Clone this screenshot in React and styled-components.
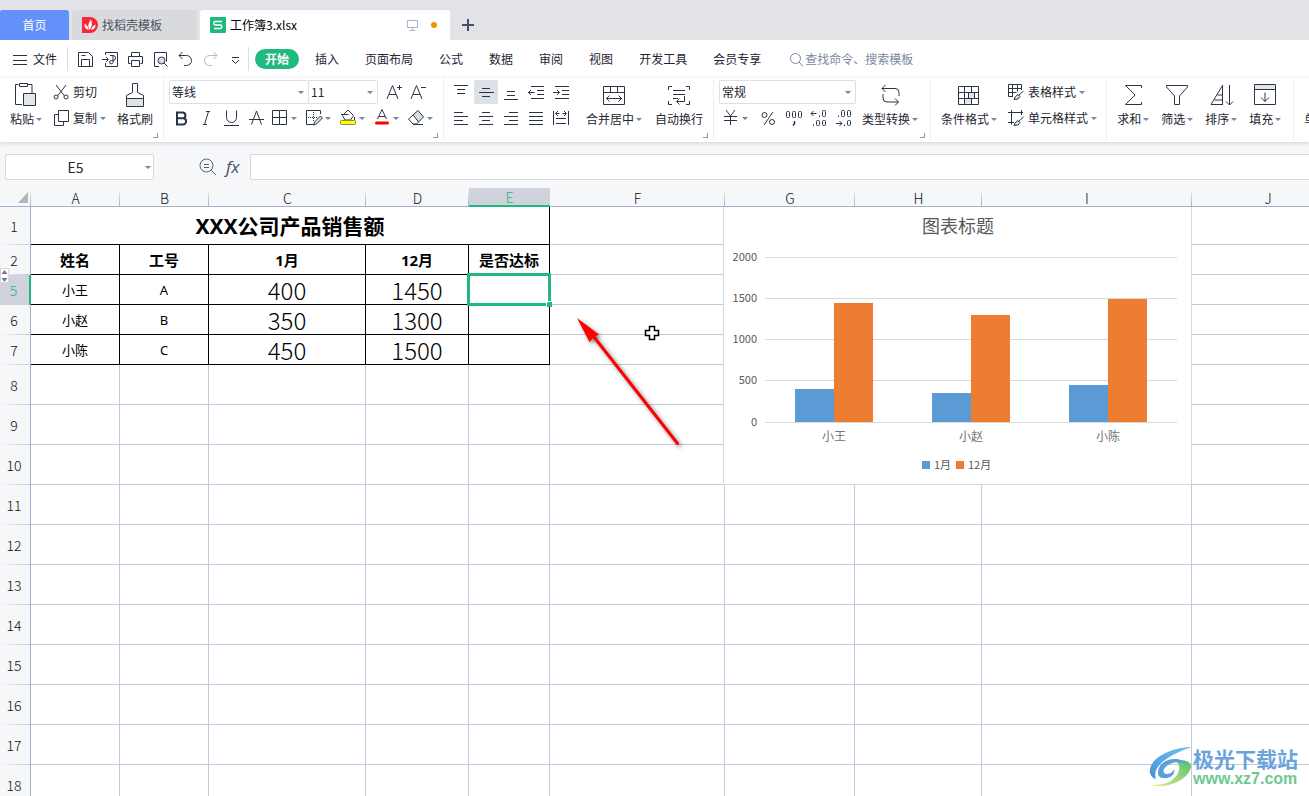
import React, { useState } from "react";
import styled, { createGlobalStyle, css } from "styled-components";

const columns = [
  { name: "A", width: 89 },
  { name: "B", width: 89 },
  { name: "C", width: 157 },
  { name: "D", width: 103 },
  { name: "E", width: 81 },
  { name: "F", width: 175 },
  { name: "G", width: 130 },
  { name: "H", width: 127 },
  { name: "I", width: 210 },
  { name: "J" }
];

const people = [
  { row: 5, name: "小王", id: "A", jan: 400, dec: 1450 },
  { row: 6, name: "小赵", id: "B", jan: 350, dec: 1300 },
  { row: 7, name: "小陈", id: "C", jan: 450, dec: 1500 }
];

const emptyRows = [8, 9, 10, 11, 12, 13, 14, 15, 16, 17, 18];
const freeColumns = ["F", "G", "H", "I", "J"];

const menus = [
  "开始",
  "插入",
  "页面布局",
  "公式",
  "数据",
  "审阅",
  "视图",
  "开发工具",
  "会员专享"
];

const icons = {
  save: <path d="M1.5 1.5h10l4 4v10h-14zM4.5 15.5v-7h8v7M4.5 4.5h4" />,
  output: (
    <path d="M3.5 4V1.5h12v14h-12V12M0 8.500h6M4 6l2.500 2.500L4 11M8 4.500h3a2.500 2.500 0 0 1 0 5H9.500a1.700 1.700 0 1 0 1.500 2V5" />
  ),
  print: (
    <path d="M4.5 5V1.5h8V5M3.5 12.5h-2v-7h14v7h-2M4.5 9.5h8v6h-8z" />
  ),
  preview: (
    <>
      <path d="M7 15.5H2.5v-14h12v9" />
      <circle cx="9.5" cy="9.5" r="3.5" fill="#d9dde2" />
      <path d="M12 12l3.5 3.5" />
    </>
  ),
  undo: <path d="M5.5 1L2 4.5 5.5 8M2 4.5h7.5a4.5 4.5 0 0 1 0 10H7" />,
  redo: <path d="M11.5 1L15 4.5 11.5 8M15 4.5H7.5a4.5 4.5 0 0 0 0 10H10" />,
  more: <path d="M5 6.5h7M5 9l3.5 3.5L12 9" />,
  file: <path d="M0 3.5h14M0 8.5h14M0 12.5h14" />,
  search: (
    <>
      <circle cx="6.5" cy="6.5" r="5" />
      <path d="M10 10l4 4.5" />
    </>
  ),
  screen: <path d="M1.5 1.5h10v7h-10zM6.5 8.5v3M3.5 11.5h6" />,
  plus: <path d="M6 0v12M0 6h12" strokeWidth="2" />,
  paste: (
    <>
      <path d="M9 22.5H2.5v-20h3M15 2.5h4V11" />
      <path d="M6.5 1.5h8v3h-8z" />
      <path d="M10.5 11.5h12v12h-12z" fill="#e3e6e9" />
    </>
  ),
  cut: (
    <>
      <path d="M3 1l8.5 11M13 1L4.5 12" />
      <circle cx="3" cy="13" r="2" />
      <circle cx="13" cy="13" r="2" />
    </>
  ),
  copy: <path d="M5.5 .5h10v11h-10zM5 4.5H1.5v11h9V12" />,
  brush: (
    <>
      <path d="M10.5 10.5V1.5h5v9M10.5 10.5l-6 3v3h17v-3l-6-3" />
      <path d="M4.5 16.5h17v8h-17z" fill="#dfe3e8" />
    </>
  ),
  bold: (
    <path
      d="M4 2.500h5.500a2.800 2.800 0 0 1 0 5.800H4zM4 8.300h6a3.100 3.100 0 0 1 0 6.200H4z"
      strokeWidth="2"
    />
  ),
  italic: <path d="M8 1.5h4M5 14.5h4M10.5 1.5l-4 13" />,
  underline: <path d="M3.5 .5v7a5 5 0 0 0 10 0v-7M1 15.5h15" />,
  strike: <path d="M3.5 14.5L8.5 1l5 13.5M1 9.5h15" />,
  grow: <path d="M1 15L6.5 1.5 12 15M3 10.5h7M11 3.5h5M13.5 1v5" />,
  shrink: <path d="M1 15L6.5 1.5 12 15M3 10.5h7M11 3.5h5" />,
  border: <path d="M1.5 1.5h14v14h-14zM8.5 1.5v14M1.5 8.5h14" />,
  drawBorder: (
    <>
      <path d="M8 15.5H1.5v-14h14V5" />
      <path d="M8.5 3v9M3 8.5h9" strokeDasharray="1 1" />
      <path d="M15.5 7l2 2-6 6-3 1 1-3z" fill="#d9dde2" />
    </>
  ),
  fill: (
    <>
      <path d="M3.5 6.5L9 1l5.5 5.5-3 4.5H6zM2 5.5h7.5" fill="#fff" />
      <path d="M15.5 8v3" />
      <rect x="1.5" y="11.5" width="15" height="4" rx="1" fill="#ff0" stroke="#8d8d3b" />
    </>
  ),
  color: (
    <>
      <path d="M4.5 10L9 .5 13.5 10M6 7.5h6" />
      <path d="M3.5 14h11" stroke="#f00" strokeWidth="3" strokeLinecap="round" />
    </>
  ),
  eraser: (
    <>
      <path d="M6 6L11 1.500 16.500 8l-5 5z" fill="#d9dde2" />
      <path d="M6 6L1.500 10l4.500 5h3.500l2-2M6 15.500h10" />
    </>
  ),
  top: <path d="M1 1.5h14M4 5.5h8M4 9.5h8" />,
  middle: <path d="M4 4.5h8M1 8.5h15M4 12.5h8" />,
  bottom: <path d="M4 7.5h8M4 11.5h8M1 15.5h14" />,
  outdent: (
    <path d="M3 2.5h13M9 6.5h7M9 10.5h7M3 14.5h13M6.5 8.5H0M3 6L.5 8.5 3 11" />
  ),
  indent: (
    <path d="M2 2.5h14M9 6.5h7M9 10.5h7M2 14.5h14M0 8.5h6.5M4 6l2.5 2.5L4 11" />
  ),
  left: <path d="M1 2.5h9M1 6.5h14M1 10.5h9M1 14.5h14" />,
  center: <path d="M4 2.5h8M1 6.5h14M4 10.5h8M1 14.5h14" />,
  right: <path d="M6 2.5h9M1 6.5h14M6 10.5h9M1 14.5h14" />,
  justify: <path d="M1 2.5h14M1 6.5h14M1 10.5h14M1 14.5h14" />,
  spread: (
    <path d="M.5 1v14M15.5 1v14M3 8.5h10M3 13.5h10M3 3.5h3.5M9.5 3.5H13M5 1L2.5 3.5 5 6M11 1l2.5 2.5L11 6" />
  ),
  merge: (
    <path d="M2.5 4.5h21v18h-21zM2.5 10.5h21M9.5 4.5v6M16.5 4.5v6M5.5 16.5h15M8.5 13.5l-3 3 3 3M17.5 13.5l3 3-3 3" />
  ),
  wrap: (
    <path d="M6 4.5H2.5V8M20 4.5h3.5V8M2.5 19v3.5H6M23.5 19v3.5H20M7 8.5h12M7 12.5h12M7 16.5h5M18.5 14v5.5H11M13.5 16.5l-3 3 3 3" />
  ),
  yen: <path d="M4 1l4.5 6L13 1M2 7.5h13M2 11.5h13M8.5 7v9" />,
  percent: (
    <>
      <circle cx="4.5" cy="5" r="2.5" />
      <circle cx="12" cy="12" r="2.5" />
      <path d="M13 2L4 15" />
    </>
  ),
  comma: (
    <>
      <rect x="1.5" y="1.5" width="3" height="6" rx="1" />
      <rect x="7.5" y="1.5" width="3" height="6" rx="1" />
      <rect x="13.5" y="1.5" width="3" height="6" rx="1" />
      <path d="M9.500 11v2.500L8 15.500" strokeWidth="1.500" />
    </>
  ),
  lessDec: (
    <>
      <path d="M6.500 3.500H1M3.500 1L1 3.500 3.500 6M9.500 5.500v1.500M3.500 14.500v1.500" />
      <rect x="12.5" y=".5" width="3" height="6" rx="1" />
      <rect x="6.5" y="10.5" width="3" height="5" rx="1" />
      <rect x="12.5" y="10.5" width="3" height="5" rx="1" />
    </>
  ),
  moreDec: (
    <>
      <path d="M3.500 5.500v1.500M1 13.500h6M4.500 11L7 13.500 4.500 16M9.500 14.500v1.500" />
      <rect x="6.5" y=".5" width="3" height="6" rx="1" />
      <rect x="12.5" y=".5" width="3" height="6" rx="1" />
      <rect x="12.5" y="10.5" width="3" height="5" rx="1" />
    </>
  ),
  convert: (
    <path d="M8.5 3L5 6.5 8.500 10M5 6.500h13a4 4 0 0 1 4 4V14M6 12v4a4 4 0 0 0 4 4h11.500M18 16.500l3.500 3.500-3.500 3.500" />
  ),
  condition: (
    <>
      <path d="M8.5 15.5h7v6h-7zM12.5 10.5h6v5h-6z" fill="#e3e6e9" stroke="none" />
      <path d="M2.5 4.5h20v18h-20zM2.5 10.5h20M2.5 16.5h20M8.5 4.5v18M15.5 4.5v6M12.5 10.5v6M18.5 10.5v6M15.5 16.5v6" />
    </>
  ),
  tableStyle: (
    <>
      <path d="M5 12.5H.5V.5h13V6M.5 4.5h13M.5 8.5h8M4.5 .5v12M9.5 .5v7" />
      <path d="M15.5 7l-5 4.500M10 10.500l2 2-2 2.500-4 .500 1.500-3z" fill="#e3e6e9" />
    </>
  ),
  cellStyle: (
    <>
      <path d="M0 2.5h15M3.5 0v14.5M13.5 0v5M0 12.5h6" />
      <path d="M15.5 7l-5 4.500M10 10.500l2 2-2 2.500-4 .500 1.500-3z" fill="#e3e6e9" />
    </>
  ),
  sum: <path d="M21.500 6V3.500H5.500L15 13 5.500 22.500h16V20" />,
  filter: <path d="M2.500 3.500h21v1.500L15.500 14v8.500h-5V14L2.500 5z" />,
  sort: (
    <path d="M14.500 3v20M14.500 3.500L3 22.500h11.500M9.500 13h5M6.500 18h8M21.500 3v20M18 19.500l3.500 3.500 3.500-3.500" />
  ),
  fillDown: (
    <>
      <path d="M2.5 2.5h21v5h-21z" fill="#e3e6e9" />
      <path d="M2.5 7.5h21v15h-21zM13 10.5v9M9 15.5l4 4 4-4" />
    </>
  ),
  zoomOut: (
    <>
      <circle cx="7.5" cy="7.5" r="6.5" />
      <path d="M12 12l5 5M5 6.500h5M5 9.500h5" />
    </>
  )
};

const Icon = ({ name, size = 17, color = "#2b3447" }) => (
  <Svg
    width={size}
    height={size}
    viewBox={`0 0 ${size} ${size}`}
    stroke={color}
    aria-hidden="true"
  >
    {icons[name]}
  </Svg>
);

const Big = ({ icon, label, arrow }) => (
  <BigButton type="button">
    <BigIcon>
      <Icon name={icon} size={26} />
    </BigIcon>
    <BigLabel>
      {label}
      {arrow && <Arrow />}
    </BigLabel>
  </BigButton>
);

const Small = ({ icon, label, arrow }) => (
  <SmallButton type="button">
    <Icon name={icon} size={16} />
    <SmallLabel>
      {label}
      {arrow && <Arrow />}
    </SmallLabel>
  </SmallButton>
);

const Tool = ({ name, label, active }) => (
  <ToolButton type="button" aria-label={label} $active={active}>
    <Icon name={name} />
  </ToolButton>
);

const DropTool = ({ name, label }) => (
  <DropButton type="button" aria-label={label}>
    <Icon name={name} size={18} />
    <Arrow />
  </DropButton>
);

const Picker = ({ label, value, width, joined }) => (
  <PickerBox $width={width} $joined={joined}>
    <Select aria-label={label} defaultValue={value}>
      <option>{value}</option>
    </Select>
    <Arrow />
  </PickerBox>
);

const Chart = () => {
  const base = 215;
  const scale = 165 / 2000;

  return (
    <ChartSvg width="469" height="278" viewBox="0 0 469 278">
      <rect x="0.5" y="-1" width="468" height="278.5" fill="#fff" stroke="#d9d9d9" />
      <text x="235" y="26" fontSize="18" textAnchor="middle" fill="#595959">
        图表标题
      </text>
      {[0, 500, 1000, 1500, 2000].map(value => {
        const y = Math.floor(base - value * scale);
        return (
          <g key={value}>
            <path d={`M42 ${y + 0.5}h412`} stroke="#d9d9d9" />
            <text x="34" y={y + 4} fontSize="11" textAnchor="end" fill="#595959">
              {value}
            </text>
          </g>
        );
      })}
      {people.map((item, idx) => {
        const x = 72 + idx * 137;
        const jan = Math.round(item.jan * scale);
        const dec = Math.round(item.dec * scale - 0.4);
        return (
          <g key={item.row}>
            <rect x={x} y={base - jan} width="39" height={jan} fill="#5b9bd5" />
            <rect x={x + 39} y={base - dec} width="39" height={dec} fill="#ed7d31" />
            <text x={x + 39} y="234" fontSize="12" textAnchor="middle" fill="#737373">
              {item.name}
            </text>
          </g>
        );
      })}
      <rect x="199" y="254" width="8" height="8" fill="#5b9bd5" />
      <text x="211" y="262" fontSize="11" fill="#595959">
        1月
      </text>
      <rect x="233" y="254" width="8" height="8" fill="#ed7d31" />
      <text x="245" y="262" fontSize="11" fill="#595959">
        12月
      </text>
    </ChartSvg>
  );
};

const App = () => {
  const [formula, setFormula] = useState("");
  const [cell, setCell] = useState("E5");

  return (
    <Page>
      <Global />
      <TabBar>
        <HomeTab type="button">首页</HomeTab>
        <DocerTab type="button">
          <svg width="16" height="16" viewBox="0 0 16 16">
            <path d="M0 0h8a8 8 0 0 1 0 16H0z" fill="#f7283c" />
            <path
              d="M7.500 13C5.500 9.500 6 6 9 2.500c1.500 4 1 7-1.500 10.500zM6.500 13C3.500 12 2 10 2.500 6.500 5 8 6.500 10 6.500 13zM9 13c.500-2.500 2-4.500 4.500-5.500.300 3-1.500 5-4.500 5.500z"
              fill="#fff"
            />
          </svg>
          找稻壳模板
        </DocerTab>
        <FileTab>
          <svg width="16" height="16" viewBox="0 0 16 16" fill="none">
            <rect width="16" height="16" rx="1" fill="#1fb97c" />
            <path
              d="M12 4.500H5.500a1.700 1.700 0 0 0 0 3.500h5a1.800 1.800 0 0 1 0 3.500H4"
              stroke="#fff"
              strokeWidth="1.3"
            />
          </svg>
          <FileName>工作簿3.xlsx</FileName>
          <Icon name="screen" size={13} color="#a9b3cc" />
          <Dot />
        </FileTab>
        <NewTab type="button" aria-label="新建">
          <Icon name="plus" size={13} color="#46506b" />
        </NewTab>
      </TabBar>

      <MenuBar>
        <FileMenu type="button">
          <Icon name="file" size={15} />
          文件
        </FileMenu>
        <QuickTools>
          <Tool name="save" label="保存" />
          <Tool name="output" label="输出为PDF" />
          <Tool name="print" label="打印" />
          <Tool name="preview" label="打印预览" />
          <Tool name="undo" label="撤销" />
          <ToolButton type="button" aria-label="恢复" disabled>
            <Icon name="redo" color="#b4b8bf" />
          </ToolButton>
          <Tool name="more" label="更多" />
        </QuickTools>
        <Menus>
          {menus.map((menu, idx) => (
            <MenuItem key={menu} type="button" $active={idx === 0}>
              {menu}
            </MenuItem>
          ))}
        </Menus>
        <SearchButton type="button">
          <Icon name="search" size={15} color="#7b87a3" />
          查找命令、搜索模板
        </SearchButton>
      </MenuBar>

      <Ribbon>
        <Group $gap={11} $left={10} $right={10}>
          <Big icon="paste" label="粘贴" arrow />
          <Rows>
            <Row>
              <Small icon="cut" label="剪切" />
            </Row>
            <Row>
              <Small icon="copy" label="复制" arrow />
            </Row>
          </Rows>
          <Big icon="brush" label="格式刷" />
          <Corner />
        </Group>
        <Group $left={5} $right={2}>
          <Rows>
            <Row>
              <Picker label="字体" value="等线" width={140} />
              <Picker label="字号" value="11" width={70} joined />
              <Pair>
                <Tool name="grow" label="增大字号" />
                <Tool name="shrink" label="减小字号" />
              </Pair>
            </Row>
            <Row>
              <Tools>
                <Tool name="bold" label="加粗" />
                <Tool name="italic" label="倾斜" />
                <Tool name="underline" label="下划线" />
                <Tool name="strike" label="删除线" />
              </Tools>
              <Drops>
                <DropTool name="border" label="边框" />
                <DropTool name="drawBorder" label="绘图边框" />
                <DropTool name="fill" label="填充颜色" />
                <DropTool name="color" label="字体颜色" />
                <DropTool name="eraser" label="清除" />
              </Drops>
            </Row>
          </Rows>
          <Corner />
        </Group>
        <Group $gap={13} $left={5} $right={10}>
          <Rows>
            <Row>
              <Tools>
                <Tool name="top" label="顶端对齐" />
                <Tool name="middle" label="垂直居中" active />
                <Tool name="bottom" label="底端对齐" />
                <Tool name="outdent" label="减少缩进量" />
                <Tool name="indent" label="增加缩进量" />
              </Tools>
            </Row>
            <Row>
              <Tools>
                <Tool name="left" label="左对齐" />
                <Tool name="center" label="水平居中" />
                <Tool name="right" label="右对齐" />
                <Tool name="justify" label="两端对齐" />
                <Tool name="spread" label="分散对齐" />
              </Tools>
            </Row>
          </Rows>
          <Big icon="merge" label="合并居中" arrow />
          <Big icon="wrap" label="自动换行" />
          <Corner />
        </Group>
        <Group $gap={6} $left={5} $right={12}>
          <Rows>
            <Row>
              <Picker label="数字格式" value="常规" width={137} />
            </Row>
            <Row>
              <Drops>
                <DropTool name="yen" label="货币" />
              </Drops>
              <Tools>
                <Tool name="percent" label="百分比" />
                <Tool name="comma" label="千位分隔" />
                <Tool name="lessDec" label="减少小数位" />
                <Tool name="moreDec" label="增加小数位" />
              </Tools>
            </Row>
          </Rows>
          <Big icon="convert" label="类型转换" arrow />
          <Corner />
        </Group>
        <Group $gap={11} $left={10} $right={9}>
          <Big icon="condition" label="条件格式" arrow />
          <Rows>
            <Row>
              <Small icon="tableStyle" label="表格样式" arrow />
            </Row>
            <Row>
              <Small icon="cellStyle" label="单元格样式" arrow />
            </Row>
          </Rows>
        </Group>
        <Group $gap={12} $left={10} $right={12}>
          <Big icon="sum" label="求和" arrow />
          <Big icon="filter" label="筛选" arrow />
          <Big icon="sort" label="排序" arrow />
          <Big icon="fillDown" label="填充" arrow />
        </Group>
        <Group $left={10} $right={10}>
          <Big icon="border" label="单元格" arrow />
        </Group>
      </Ribbon>

      <FormulaBar>
        <NameBox>
          <NameInput
            aria-label="名称框"
            value={cell}
            onChange={e => setCell(e.target.value)}
          />
          <Arrow />
        </NameBox>
        <FormulaTools>
          <PlainButton type="button" aria-label="浏览公式结果">
            <Icon name="zoomOut" size={18} color="#55607a" />
          </PlainButton>
          <PlainButton type="button" aria-label="插入函数">
            <Fx>fx</Fx>
          </PlainButton>
        </FormulaTools>
        <FormulaInput
          aria-label="编辑栏"
          value={formula}
          onChange={e => setFormula(e.target.value)}
        />
      </FormulaBar>

      <Sheet>
        <Grid>
          <colgroup>
            <Col $width={31} />
            {columns.map(({ name, width }) => (
              <Col key={name} $width={width} />
            ))}
          </colgroup>
          <thead>
            <tr>
              <CornerHead aria-label="全选">
                <svg width="10" height="11" viewBox="0 0 10 11">
                  <path d="M10 0v11H0z" fill="#b5b5b5" />
                </svg>
              </CornerHead>
              {columns.map(({ name }) => (
                <ColHead key={name} scope="col" $active={name === "E"}>
                  {name}
                </ColHead>
              ))}
            </tr>
          </thead>
          <tbody>
            <GridRow $height={38}>
              <RowHead scope="row">1</RowHead>
              <TitleCell colSpan={5}>XXX公司产品销售额</TitleCell>
              {freeColumns.map(name => (
                <Cell key={name} $plain />
              ))}
            </GridRow>
            <GridRow $height={30}>
              <RowHead scope="row">2</RowHead>
              {["姓名", "工号", "1月", "12月", "是否达标"].map(text => (
                <HeadCell key={text}>{text}</HeadCell>
              ))}
              {freeColumns.map(name => (
                <Cell key={name} $plain />
              ))}
            </GridRow>
            {people.map(item => (
              <GridRow key={item.row} $height={30}>
                <RowHead scope="row" $active={item.row === 5}>
                  {item.row}
                  {item.row === 5 && (
                    <Unhide>
                      <svg width="7" height="12" viewBox="0 0 7 12" fill="#6f7c96">
                        <path d="M3.5 0L6.5 4h-6zM3.5 12L.5 8h6z" />
                      </svg>
                    </Unhide>
                  )}
                </RowHead>
                <DataCell>{item.name}</DataCell>
                <DataCell>{item.id}</DataCell>
                <NumberCell>{item.jan}</NumberCell>
                <NumberCell>{item.dec}</NumberCell>
                <DataCell>
                  {item.row === 5 && (
                    <Selection>
                      <Handle />
                    </Selection>
                  )}
                </DataCell>
                {freeColumns.map(name => (
                  <Cell key={name} $plain />
                ))}
              </GridRow>
            ))}
            {emptyRows.map(row => (
              <GridRow key={row} $height={40}>
                <RowHead scope="row">{row}</RowHead>
                {columns.map(({ name }) => (
                  <Cell key={name} />
                ))}
              </GridRow>
            ))}
          </tbody>
        </Grid>
        <Chart />
        <ArrowMark width="120" height="145" viewBox="0 0 120 145">
          <path
            d="M24 19L107.5 125.5"
            stroke="#f00"
            strokeWidth="3"
            strokeLinecap="round"
          />
          <path d="M7 0l22 16.500-5 2.500-4.500 5z" fill="#f00" />
        </ArrowMark>
        <Pointer width="16" height="16" viewBox="0 0 16 16">
          <path
            d="M5.5 1.500h5v4h4v5h-4v4h-5v-4h-4v-5h4z"
            fill="#fff"
            stroke="#000"
            strokeWidth="1.5"
          />
        </Pointer>
      </Sheet>

      <Brand href="#xz7">
        <svg width="44" height="42" viewBox="0 0 44 42">
          <defs>
            <linearGradient id="swirlBlue" x1="0" y1="1" x2="1" y2="0">
              <stop offset="0" stopColor="#4b8fd6" />
              <stop offset="1" stopColor="#71c6ee" />
            </linearGradient>
            <linearGradient id="swirlGreen" x1="0" y1="1" x2="1" y2="0">
              <stop offset="0" stopColor="#e6f08a" />
              <stop offset="1" stopColor="#4fc06e" />
            </linearGradient>
          </defs>
          <path
            d="M43 1C24 1 3 11 1 23 0 28 3 32 7 33 3 22 14 11 43 1z"
            fill="url(#swirlBlue)"
          />
          <path
            d="M2 39C16 40 28 34 30 24c1-5-1-7-4-9 8-2 16 0 16 5C41 33 18 44 2 39z"
            fill="url(#swirlGreen)"
          />
          <path
            d="M9 27c0-9 8-14 17-14 7 0 11 3 12 6-6-4-14-3-19 0-5 3-6 8-2 9 4 0 7-2 8-5 2 6-5 10-10 9-4 0-6-2-6-5z"
            fill="#5aa0de"
          />
        </svg>
        <BrandText>
          <BrandName>极光下载站</BrandName>
          <BrandUrl>www.xz7.com</BrandUrl>
        </BrandText>
      </Brand>
    </Page>
  );
};

export default App;

const Global = createGlobalStyle`
  * {
    box-sizing: border-box;
  }

  body {
    margin: 0;
    background: #fff;
  }

  button,
  input,
  select {
    font: inherit;
    color: inherit;
    border: 0;
    padding: 0;
    margin: 0;
    background: none;
  }
`;

const Page = styled.div`
  position: relative;
  height: 100vh;
  display: flex;
  flex-direction: column;
  overflow: hidden;
  color: #1f2533;
  font-family: "Noto Sans CJK SC", sans-serif;
  font-size: 12px;
  line-height: 20px;
  white-space: nowrap;
`;

const Svg = styled.svg`
  display: block;
  flex: none;
  fill: none;
`;

const TabBar = styled.div`
  flex: none;
  display: flex;
  gap: 3px;
  height: 40px;
  padding-top: 10px;
  background: #e2e3e7;
`;

const HomeTab = styled.button`
  width: 69px;
  color: #fff;
  background: #6390fb;
  border-radius: 2px 3px 0 0;
`;

const DocerTab = styled.button`
  display: flex;
  align-items: center;
  gap: 4px;
  width: 125px;
  padding-left: 10px;
  color: #4c5260;
  background: #d8dadd;
  border-radius: 3px 3px 0 0;
`;

const FileTab = styled.div`
  display: flex;
  align-items: center;
  width: 250px;
  padding: 0 13px 0 10px;
  background: #fff;
  border-radius: 3px 3px 0 0;
`;

const FileName = styled.span`
  flex: 1;
  margin-left: 4px;
  color: #000;
`;

const Dot = styled.span`
  width: 6px;
  height: 6px;
  margin-left: 12px;
  border-radius: 50%;
  background: #e59700;
`;

const NewTab = styled.button`
  padding-left: 9px;
`;

const MenuBar = styled.div`
  flex: none;
  display: flex;
  align-items: center;
  height: 38px;
`;

const FileMenu = styled.button`
  display: flex;
  align-items: center;
  gap: 5px;
  height: 24px;
  padding: 0 10px 0 13px;
  border-right: 1px solid #dadde2;
`;

const QuickTools = styled.div`
  display: flex;
  gap: 1px;
  height: 24px;
  padding: 0 1px 0 5px;
  border-right: 1px solid #dadde2;
`;

const Menus = styled.div`
  display: flex;
  gap: 6px;
  padding-left: 6px;
`;

const MenuItem = styled.button`
  height: 20px;
  padding: 0 10px;
  border-radius: 10px;

  ${props =>
    props.$active &&
    css`
      color: #fff;
      font-weight: 700;
      background: #20b97e;
    `}
`;

const SearchButton = styled.button`
  display: flex;
  align-items: center;
  gap: 1px;
  margin-left: 18px;
  color: #7b87a3;
`;

const Ribbon = styled.div`
  position: relative;
  flex: none;
  display: flex;
  height: 64px;
  padding-bottom: 2px;
  box-shadow: 0 1px 4px rgba(60, 70, 90, 0.22);
`;

const Group = styled.div`
  position: relative;
  flex: none;
  display: flex;
  align-items: flex-start;
  gap: ${props => props.$gap || 0}px;
  padding-left: ${props => props.$left}px;
  padding-right: ${props => props.$right}px;
  border-right: 1px solid #eceef1;
`;

const Corner = styled.span`
  position: absolute;
  right: 5px;
  bottom: 2px;
  width: 5px;
  height: 5px;
  border: solid #8f99b0;
  border-width: 0 1px 1px 0;
`;

const Rows = styled.div`
  padding-top: 1px;
`;

const Row = styled.div`
  display: flex;
  align-items: center;
  height: 26px;
`;

const Tools = styled.div`
  display: flex;
  gap: 1px;
`;

const Pair = styled.div`
  display: flex;
  padding-left: 4px;
`;

const Drops = styled.div`
  display: flex;
  padding-left: 3px;
`;

const ToolButton = styled.button`
  display: flex;
  align-items: center;
  justify-content: center;
  width: 24px;
  height: 24px;
  border-radius: 2px;
  background: ${props => (props.$active ? "#dce1e6" : "transparent")};
`;

const Arrow = styled.span`
  flex: none;
  border: solid transparent;
  border-width: 3px 3px 0;
  border-top-color: #77829b;
  pointer-events: none;
`;

const DropButton = styled.button`
  display: flex;
  align-items: center;
  gap: 2px;
  width: 34px;
  height: 24px;
`;

const BigButton = styled.button`
  display: flex;
  flex-direction: column;
  align-items: center;
  padding-top: 3px;
`;

const BigIcon = styled.span`
  display: flex;
  align-items: center;
  height: 28px;
`;

const BigLabel = styled.span`
  display: flex;
  align-items: center;
  gap: 2px;
`;

const SmallButton = styled.button`
  display: flex;
  align-items: center;
  gap: 4px;
`;

const SmallLabel = styled.span`
  display: flex;
  align-items: center;
  gap: 3px;
`;

const PickerBox = styled.span`
  display: flex;
  align-items: center;
  width: ${props => props.$width}px;
  height: 24px;
  padding-right: 4px;
  border: 1px solid #dcdfe4;
  border-radius: 2px;
  margin-left: ${props => (props.$joined ? "-1px" : 0)};
`;

const Select = styled.select`
  flex: 1;
  min-width: 0;
  padding-left: 2px;
  appearance: none;
  outline: none;
`;

const FormulaBar = styled.div`
  flex: none;
  display: flex;
  align-items: center;
  height: 46px;
  padding: 12px 0 8px 5px;
  background: #f5f7f9;
`;

const NameBox = styled.div`
  display: flex;
  align-items: center;
  width: 149px;
  height: 26px;
  padding-right: 2px;
  background: #fff;
  border: 1px solid #d5d8dd;
  border-radius: 2px;
`;

const NameInput = styled.input`
  flex: 1;
  min-width: 0;
  font-size: 14px;
  text-align: center;
  outline: none;
`;

const FormulaTools = styled.div`
  display: flex;
  align-items: center;
  gap: 9px;
  width: 96px;
  padding-left: 45px;
`;

const PlainButton = styled.button`
  display: flex;
`;

const Fx = styled.span`
  color: #46506b;
  font-family: "Open Sans", sans-serif;
  font-size: 17px;
  font-style: italic;
`;

const FormulaInput = styled.input`
  flex: 1;
  height: 26px;
  padding: 0 6px;
  background: #fff;
  border: solid #d5d8dd;
  border-width: 1px 0 1px 1px;
  border-radius: 2px 0 0 2px;
  outline: none;
`;

const Sheet = styled.div`
  position: relative;
  flex: 1;
  min-height: 0;
  overflow: hidden;
`;

const Grid = styled.table`
  table-layout: fixed;
  width: 100%;
  min-width: 1344px;
  border-collapse: separate;
  border-spacing: 0;
  text-align: center;
`;

const Col = styled.col`
  width: ${props => (props.$width ? `${props.$width}px` : "auto")};
`;

const CornerHead = styled.th`
  height: 19px;
  padding: 0 3px 3px 0;
  text-align: right;
  vertical-align: bottom;
  background: linear-gradient(to top, #a5b1ca, #f5f7f9) right / 1px 100%
    no-repeat #f5f7f9;
  border-bottom: 1px solid #a5b1ca;

  svg {
    display: block;
    margin-left: auto;
  }
`;

const ColHead = styled.th`
  height: 19px;
  padding: 2px 0 0;
  font-size: 14px;
  font-weight: 300;
  line-height: 16px;
  color: #111;
  background: linear-gradient(to top, #a5b1ca, #f5f7f9) right / 1px 100%
    no-repeat #f5f7f9;
  border-bottom: 1px solid #a5b1ca;

  ${props =>
    props.$active &&
    css`
      color: #20b97e;
      background: #d0d3dc;
      border-bottom: 2px solid #20b97e;
      padding-top: 1px;
    `}
`;

const GridRow = styled.tr`
  height: ${props => props.$height}px;
`;

const RowHead = styled.th`
  position: relative;
  padding: 0 2px 0 0;
  font-size: 14px;
  font-weight: 300;
  color: #111;
  background: linear-gradient(to left, #c3c9dc, #f5f7f9) bottom / 100% 1px
    no-repeat #f5f7f9;
  border-right: 1px solid #a5b1ca;

  ${props =>
    props.$active &&
    css`
      color: #20b97e;
      background: #d0d3dc;
      border-right: 2px solid #20b97e;
    `}
`;

const Cell = styled.td`
  padding: 0;
  border: solid #c3c9dc;
  border-width: ${props => (props.$plain ? "0 0 1px" : "0 1px 1px 0")};
`;

const DataCell = styled.td`
  position: relative;
  padding: 0;
  color: #000;
  font-family: "Noto Sans", "Noto Sans CJK SC", sans-serif;
  font-size: 13px;
  border: solid #000;
  border-width: 0 1px 1px 0;
`;

const TitleCell = styled(DataCell)`
  font-size: 21px;
  font-weight: 700;
`;

const HeadCell = styled(DataCell)`
  font-size: 15px;
  font-weight: 700;
`;

const NumberCell = styled(DataCell)`
  font-family: "Noto Sans CJK SC", sans-serif;
  font-size: 24px;
  font-weight: 300;
`;

const Unhide = styled.span`
  position: absolute;
  left: 0;
  top: -7px;
  display: flex;
  align-items: center;
  justify-content: center;
  width: 9px;
  height: 15px;
  background: #fff;
  border: 1px solid #d5d8dd;
`;

const Selection = styled.span`
  position: absolute;
  inset: -2px;
  border: 3px solid #20b97e;
  z-index: 1;
`;

const Handle = styled.span`
  position: absolute;
  right: -4px;
  bottom: -4px;
  width: 6px;
  height: 6px;
  background: #20b97e;
  border: solid #fff;
  border-width: 1px 0 0 1px;
`;

const ChartSvg = styled.svg`
  position: absolute;
  left: 723px;
  top: 19px;
`;

const ArrowMark = styled.svg`
  position: absolute;
  left: 570px;
  top: 130px;
  fill: none;
  filter: drop-shadow(2px 2px 2px rgba(0, 0, 0, 0.5));
`;

const Pointer = styled.svg`
  position: absolute;
  left: 644px;
  top: 137px;
`;

const Brand = styled.a`
  position: absolute;
  right: 11px;
  bottom: 8px;
  display: flex;
  align-items: center;
  text-decoration: none;
`;

const BrandText = styled.span`
  display: flex;
  flex-direction: column;
`;

const BrandName = styled.span`
  color: #6ba3dc;
  font-size: 21px;
  font-weight: 700;
  line-height: 24px;
`;

const BrandUrl = styled.span`
  color: #6cc98f;
  font-family: "Liberation Sans", sans-serif;
  font-size: 16px;
  font-weight: 700;
  line-height: 18px;
`;
